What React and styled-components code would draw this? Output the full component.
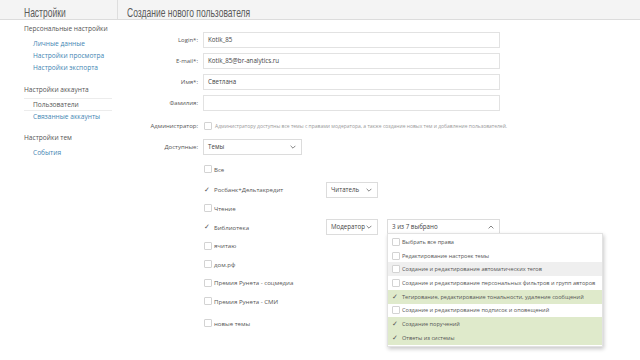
import styled, { createGlobalStyle } from 'styled-components';

const Global = createGlobalStyle`
  html, body { margin: 0; padding: 0; background: #fff; }
  body { font-family: "Open Sans", "Noto Sans", sans-serif; color: #555; }
  * { box-sizing: border-box; }
`;

const Page = styled.div`
  width: 640px;
  height: 360px;
  overflow: hidden;
  display: flex;
  flex-direction: column;
`;

const Header = styled.div`
  display: flex;
  height: 20px;
  background: #f4f4f4;
  border-bottom: 1px solid #dcdcdc;
  flex-shrink: 0;
`;

const HeaderTitle = styled.div`
  width: ${({ $w }) => $w || 'auto'};
  flex: ${({ $w }) => ($w ? 'none' : '1')};
  padding-left: ${({ $pl }) => $pl}px;
  border-right: ${({ $divider }) => ($divider ? '1px solid #dedede' : 'none')};
  white-space: nowrap;
  overflow: hidden;
`;

const HeaderText = styled.span`
  display: inline-block;
  font-family: "Liberation Sans", "Roboto", sans-serif;
  font-size: 13.5px;
  line-height: 19px;
  color: #5a5a5a;
  transform: scaleX(0.63);
  transform-origin: left center;
`;

const Body = styled.div`
  display: flex;
  flex: 1;
`;

const Sidebar = styled.nav`
  width: 118px;
  flex-shrink: 0;
  padding: 3px 0 0 24px;
  font-size: 6.6px;
`;

const Section = styled.div`
  margin-bottom: ${({ $mb }) => $mb}px;
`;

const SectionTitle = styled.div`
  color: #555;
  line-height: 12px;
  margin-bottom: 3px;
`;

const NavItem = styled.div`
  padding-left: 9px;
  line-height: ${({ $active }) => ($active ? 11 : 12)}px;
  color: ${({ $active }) => ($active ? '#555' : '#3f86b3')};
  border-top: ${({ $active }) => ($active ? '1px solid #ececec' : 'none')};
  border-bottom: ${({ $active }) => ($active ? '1px solid #ececec' : 'none')};
  margin-right: 6px;
  margin-top: ${({ $active }) => ($active ? -1 : 0)}px;
`;

const Main = styled.main`
  flex: 1;
  padding-top: 12px;
  display: flex;
  flex-direction: column;
`;

const Field = styled.div`
  display: grid;
  grid-template-columns: 80px 1fr;
  column-gap: 5px;
  align-items: center;
  min-height: 16px;
  margin-bottom: ${({ $mb }) => ($mb === undefined ? 5 : $mb)}px;
`;

const Label = styled.div`
  text-align: right;
  font-size: 6px;
  color: #555;
`;

const Input = styled.div`
  width: 297px;
  height: 16px;
  border: 1px solid #e2e2e2;
  padding-left: 4px;
  font-size: 6.2px;
  line-height: 14px;
  color: #444;
`;

const Box = styled.span`
  display: inline-block;
  width: 8px;
  height: 8px;
  border: 1px solid #d3d3d3;
  border-radius: 1px;
  background: #fff;
  flex-shrink: 0;
`;

const Check = styled.span`
  display: inline-block;
  width: 8px;
  font-size: 7px;
  line-height: 8px;
  color: #555;
  flex-shrink: 0;
  font-family: "DejaVu Sans", sans-serif;
`;

const Hint = styled.div`
  display: flex;
  align-items: center;
  gap: 3px;
  font-size: 5px;
  color: #999;
  white-space: nowrap;
  padding-left: 1px;
`;

const SelectBox = styled.div`
  position: relative;
  width: ${({ $w }) => $w}px;
  height: 16px;
  border: 1px solid #dcdcdc;
  padding-left: 4px;
  font-size: 6.2px;
  line-height: 14px;
  color: #444;
  background: #fff;
  display: flex;
  align-items: center;
  justify-content: space-between;
  padding-right: 5px;
`;

const Chevron = ({ up }) => (
  <svg width="6" height="4" viewBox="0 0 6 4">
    <path d={up ? 'M0.6 3.4 L3 1 L5.4 3.4' : 'M0.6 0.8 L3 3.2 L5.4 0.8'} fill="none" stroke="#777" strokeWidth="0.9" />
  </svg>
);

const TopicList = styled.div`
  margin-left: 86px;
  display: flex;
  flex-direction: column;
  margin-top: 5px;
`;

const TopicRow = styled.div`
  position: relative;
  height: 18.6px;
  margin-top: ${({ $mt }) => $mt || 0}px;
  display: flex;
  align-items: center;
`;

const TopicName = styled.div`
  display: flex;
  align-items: center;
  gap: 2px;
  width: 122px;
  font-size: 6.1px;
  color: #555;
  white-space: nowrap;
`;

const Controls = styled.div`
  display: flex;
  gap: 9px;
  align-items: center;
`;

const MultiWrap = styled.div`
  position: relative;
`;

const Dropdown = styled.div`
  position: absolute;
  top: 14px;
  left: 0;
  width: 216px;
  background: #fff;
  border: 1px solid #e2e2e2;
  box-shadow: 1px 2px 4px rgba(0, 0, 0, 0.22);
  z-index: 5;
  padding: 1px 0;
`;

const Option = styled.div`
  display: flex;
  align-items: center;
  gap: 2px;
  height: 13.7px;
  padding-left: 4px;
  font-size: 5.6px;
  color: #555;
  white-space: nowrap;
  background: ${({ $state }) => ($state === 'on' ? '#dfeacb' : $state === 'hover' ? '#efefef' : '#fff')};
`;

const topics = [
  { name: 'Все' },
  { name: 'Росбанк+Дельтакредит', checked: true, role: 'Читатель', mt: 2 },
  { name: 'Чтение' },
  { name: 'Библиотека', checked: true, role: 'Модератор', multi: true },
  { name: 'ячитаю' },
  { name: 'дом.рф' },
  { name: 'Премия Рунета - соцмедиа' },
  { name: 'Премия Рунета - СМИ' },
  { name: 'новые темы', mt: 3 },
];

const rights = [
  { label: 'Выбрать все права' },
  { label: 'Редактирование настроек темы' },
  { label: 'Создание и редактирование автоматических тегов', state: 'hover' },
  { label: 'Создание и редактирование персональных фильтров и групп авторов' },
  { label: 'Тегирование, редактирование тональности, удаление сообщений', state: 'on' },
  { label: 'Создание и редактирование подписок и оповещений' },
  { label: 'Создание поручений', state: 'on' },
  { label: 'Ответы из системы', state: 'on' },
];

export default function App() {
  return (
    <Page>
      <Global />
      <Header>
        <HeaderTitle $w="118px" $pl={24} $divider>
          <HeaderText>Настройки</HeaderText>
        </HeaderTitle>
        <HeaderTitle $pl={9}>
          <HeaderText>Создание нового пользователя</HeaderText>
        </HeaderTitle>
      </Header>
      <Body>
        <Sidebar>
          <Section $mb={10}>
            <SectionTitle>Персональные настройки</SectionTitle>
            <NavItem>Личные данные</NavItem>
            <NavItem>Настройки просмотра</NavItem>
            <NavItem>Настройки экспорта</NavItem>
          </Section>
          <Section $mb={9}>
            <SectionTitle>Настройки аккаунта</SectionTitle>
            <NavItem $active>Пользователи</NavItem>
            <NavItem>Связанные аккаунты</NavItem>
          </Section>
          <Section>
            <SectionTitle>Настройки тем</SectionTitle>
            <NavItem>События</NavItem>
          </Section>
        </Sidebar>
        <Main>
          <Field>
            <Label>Login*:</Label>
            <Input>Kotik_85</Input>
          </Field>
          <Field>
            <Label>E-mail*:</Label>
            <Input>Kotik_85@br-analytics.ru</Input>
          </Field>
          <Field>
            <Label>Имя*:</Label>
            <Input>Светлана</Input>
          </Field>
          <Field $mb={7}>
            <Label>Фамилия:</Label>
            <Input />
          </Field>
          <Field $mb={5}>
            <Label>Администратор:</Label>
            <Hint>
              <Box />
              Администратору доступны все темы с правами модератора, а также создание новых тем и добавление пользователей.
            </Hint>
          </Field>
          <Field $mb={0}>
            <Label>Доступные:</Label>
            <SelectBox $w={99}>
              Темы
              <Chevron />
            </SelectBox>
          </Field>
          <TopicList>
            {topics.map((t) => (
              <TopicRow key={t.name} $mt={t.mt}>
                <TopicName>
                  {t.checked ? <Check>✓</Check> : <Box />}
                  {t.name}
                </TopicName>
                {t.role && (
                  <Controls>
                    <SelectBox $w={52}>
                      {t.role}
                      <Chevron />
                    </SelectBox>
                    {t.multi && (
                      <MultiWrap>
                        <SelectBox $w={113}>
                          3 из 7 выбрано
                          <Chevron up />
                        </SelectBox>
                        <Dropdown>
                          {rights.map((r) => (
                            <Option key={r.label} $state={r.state}>
                              {r.state === 'on' ? <Check>✓</Check> : <Box />}
                              {r.label}
                            </Option>
                          ))}
                        </Dropdown>
                      </MultiWrap>
                    )}
                  </Controls>
                )}
              </TopicRow>
            ))}
          </TopicList>
        </Main>
      </Body>
    </Page>
  );
}
